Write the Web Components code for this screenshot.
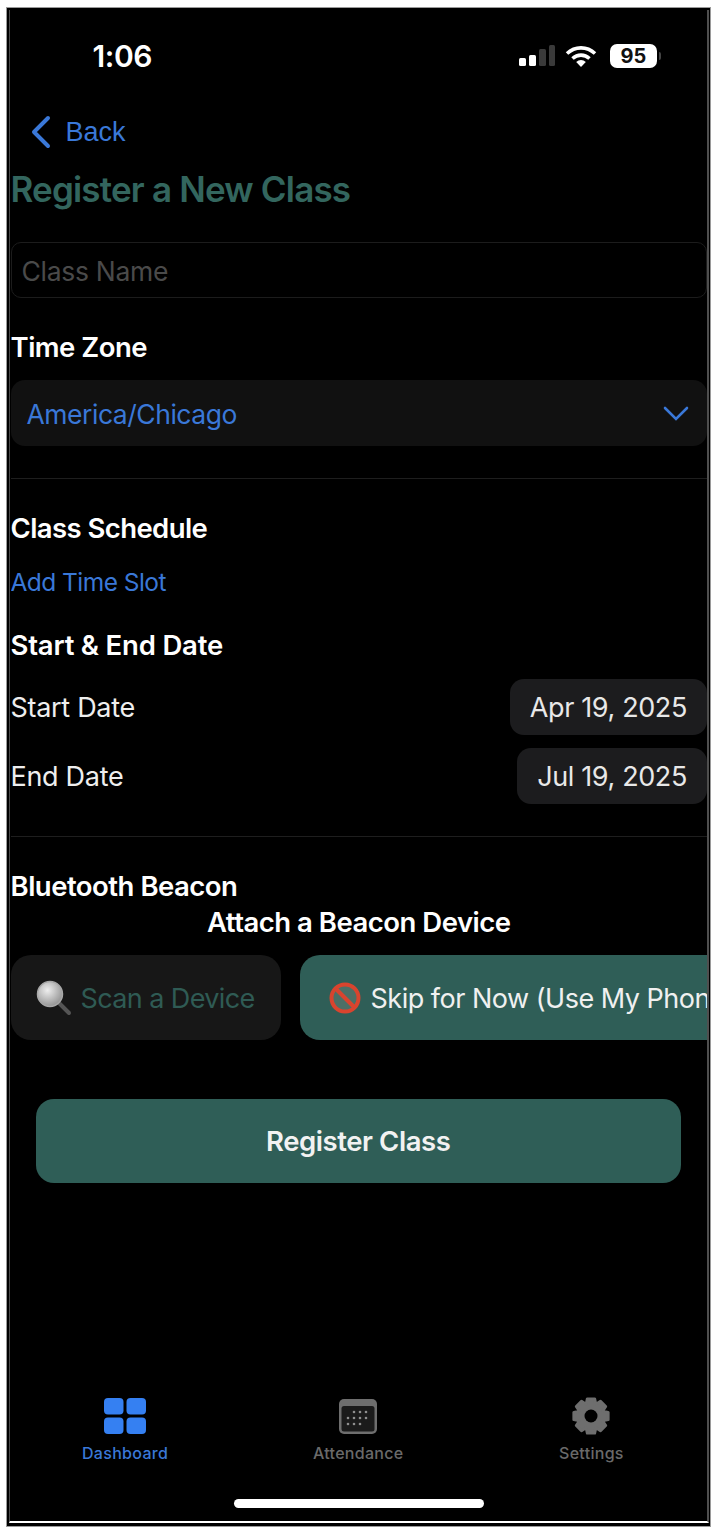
<!DOCTYPE html>
<html><head><meta charset="utf-8">
<style>
html,body{margin:0;padding:0;background:#fff;}
body{width:718px;height:1534px;overflow:hidden;font-family:Inter,"Liberation Sans",sans-serif;}
</style></head>
<body>
<phone-frame>
  <status-bar></status-bar>
  <main-form></main-form>
  <tab-bar></tab-bar>
</phone-frame>
<script>
const C={blue:'#3a78d8',green:'#2f5e57'};
function def(name,html){customElements.define(name,class extends HTMLElement{constructor(){super();this.attachShadow({mode:'open'}).innerHTML=html;}});}
function gear(){
  const cx=20,cy=20,n=8,ro=17.5,ri=13.2;let p=[];
  for(let i=0;i<n;i++){
    const a=i*2*Math.PI/n-Math.PI/2,w=.21,v=.36;
    [[ri,-v],[ro,-w],[ro,w],[ri,v]].forEach(([r,d])=>p.push((cx+r*Math.cos(a+d)).toFixed(2)+','+(cy+r*Math.sin(a+d)).toFixed(2)));
  }
  return `<svg width="40" height="40" viewBox="0 0 40 40"><polygon points="${p.join(' ')}" fill="#6e6e6e" stroke="#6e6e6e" stroke-width="3" stroke-linejoin="round"/><circle cx="20" cy="20" r="6.5" fill="#000"/></svg>`;
}
def('phone-frame',`<style>
:host{display:block;box-sizing:border-box;width:718px;height:1534px;padding:7px 7px 7px 6px;background:#fff}
.frame{box-sizing:border-box;height:100%;border:1px solid #9a9a9a;background:#000;padding:2px 1px 3px 2px}
.in{box-sizing:border-box;height:100%;border-left:1.5px solid #4a4a4a;border-right:2px solid #4f4f4f;border-bottom:2px solid #fff;padding-left:.5px;display:flex;flex-direction:column;color:#fff;overflow:hidden}
</style><div class="frame"><div class="in"><slot></slot></div></div>`);
def('status-bar',`<style>
:host{display:block;flex:none;height:102px}
.row{display:flex;align-items:center;justify-content:space-between;padding:29px 46px 0 82px;height:34px}
.t{font:600 30px/34px Inter,"Liberation Sans",sans-serif;letter-spacing:-.4px}
.r{display:flex;align-items:center}
.bat{display:flex;align-items:center;gap:1.5px;margin-left:13px}
.b{width:47px;height:24px;border-radius:7px;background:#fff;color:#111;font:700 20px/24px Inter,"Liberation Sans",sans-serif;text-align:center}
.n{width:2.5px;height:8px;background:#444;border-radius:0 2px 2px 0}
svg{display:block}
</style><div class="row"><span class="t">1:06</span><div class="r">
<svg width="36" height="24" viewBox="0 0 36 24" style="margin-right:10px"><rect x="0" y="14" width="7" height="8" rx="1.5" fill="#fff"/><rect x="10" y="11" width="7" height="11" rx="1.5" fill="#fff"/><rect x="20" y="5" width="7" height="17" rx="1.5" fill="#3a3a3a"/><rect x="30" y="1" width="6" height="21" rx="1.5" fill="#3a3a3a"/></svg>
<svg width="32" height="24" viewBox="0 0 32 24" fill="none" stroke="#fff" stroke-width="3.6"><path d="M2 9.500C10 2 22 2 30 9.500"/><path d="M7.500 14.500C12.500 10 19.500 10 24.500 14.500"/><path d="M16 23l-4.800-5a7 7 0 0 1 9.600 0z" fill="#fff" stroke="none"/></svg>
<div class="bat"><div class="b">95</div><div class="n"></div></div></div></div>`);
def('main-form',`<style>
:host{display:block;flex:1;min-height:0;overflow:hidden;font-family:Inter,"Liberation Sans",sans-serif}
.back{display:flex;align-items:center;gap:14px;margin:0 0 0 19px;height:40px;color:${C.blue};font-size:27px;font-family:"Liberation Sans",sans-serif}
h1{margin:17px 0 0;font:600 35px/40px Inter,"Liberation Sans",sans-serif;color:#33665e;letter-spacing:-.82px}
.inp{box-sizing:border-box;height:56px;margin:33px 0 0;border:1px solid #1c1c1c;border-radius:10px;padding:0 10px;line-height:56px;font-size:26.5px;color:#4a4a4a;letter-spacing:-.3px}
.lab{font:600 27.5px/32px Inter,"Liberation Sans",sans-serif;letter-spacing:-.5px}
.sel{box-sizing:border-box;height:66px;margin-top:17px;background:#111;border-radius:14px;display:flex;align-items:center;justify-content:space-between;padding:1px 18px 0 16px;color:${C.blue};font-size:26.5px;letter-spacing:-.47px}
hr{border:0;height:1px;background:#1e1e1e;margin:0}
.row{display:flex;justify-content:space-between;align-items:center;font-size:27px;color:#eee;letter-spacing:-.3px}
.d{background:#1c1c1e;border-radius:14px;height:56px;padding:0 20px 0 20px;line-height:58px;color:#e8e8e8;letter-spacing:-.38px}
.c{text-align:center}
.btns{display:flex;gap:19px;margin-top:17px;white-space:nowrap;overflow:hidden}
.bt{flex:none;height:85px;border-radius:20px;display:flex;align-items:center;font-size:27px;box-sizing:border-box}
.bt span{padding-top:2px}
.s{width:270px;background:#171717;color:#2f5b54;padding-left:25px;gap:9px;letter-spacing:-.6px}
.k{width:430px;background:${C.green};color:#f0f0f0;padding-left:29px;gap:10px;letter-spacing:-.5px}
.rg{height:84px;margin:59px 26px 0 25px;border-radius:18px;background:${C.green};color:#f2f2f2;font:600 27.5px/84px Inter,"Liberation Sans",sans-serif;text-align:center;letter-spacing:-.43px}
svg{display:block;flex:none}
</style>
<div class="back"><svg width="22" height="34" viewBox="0 0 22 34" fill="none" stroke="${C.blue}" stroke-width="4" stroke-linecap="round" stroke-linejoin="round"><path d="M18 3L4 17l14 14"/></svg><span>Back</span></div>
<h1>Register a New Class</h1>
<div class="inp">Class Name</div>
<div class="lab" style="margin-top:33px">Time Zone</div>
<div class="sel"><span>America/Chicago</span><svg width="26" height="16" viewBox="0 0 26 16" fill="none" stroke="${C.blue}" stroke-width="2.6" stroke-linecap="round"><path d="M2 2l11 11L24 2"/></svg></div>
<hr style="margin-top:32px">
<div class="lab" style="margin-top:33px;letter-spacing:-.58px">Class Schedule</div>
<div style="margin-top:22px;height:32px;line-height:32px;font-size:24.5px;color:${C.blue};letter-spacing:-.55px">Add Time Slot</div>
<div class="lab" style="margin-top:31px;letter-spacing:-.2px">Start &amp; End Date</div>
<div class="row" style="margin-top:18px"><span>Start Date</span><span class="d">Apr 19, 2025</span></div>
<div class="row" style="margin-top:13px"><span>End Date</span><span class="d">Jul 19, 2025</span></div>
<hr style="margin-top:32px">
<div class="lab" style="margin-top:33px">Bluetooth Beacon</div>
<div class="lab c" style="margin-top:4px">Attach a Beacon Device</div>
<div class="btns"><div class="bt s"><svg width="36" height="36" viewBox="0 0 36 36"><defs><radialGradient id="g" cx=".4" cy=".35" r=".7"><stop offset="0" stop-color="#eeeeee"/><stop offset="1" stop-color="#8f8f8f"/></radialGradient></defs><path d="M22 22l11 11" stroke="#555" stroke-width="4" stroke-linecap="round"/><circle cx="14" cy="14" r="12.500" fill="url(#g)" stroke="#a8a8a8" stroke-width="1.500"/></svg><span>Scan a Device</span></div>
<div class="bt k"><svg width="32" height="32" viewBox="0 0 32 32" fill="rgba(255,220,200,.14)" stroke="#d9442e" stroke-width="4"><circle cx="16" cy="16" r="13.500"/><path d="M7 7l18 18"/></svg><span>Skip for Now (Use My Phone)</span></div></div>
<div class="rg">Register Class</div>`);
const tab=(label,col,svg)=>`<div class="t" style="color:${col}">${svg}<span>${label}</span></div>`;
def('tab-bar',`<style>
:host{display:block;flex:none;height:127px;box-sizing:border-box;padding-top:3px;font-family:Inter,"Liberation Sans",sans-serif}
.tabs{display:grid;grid-template-columns:repeat(3,1fr);margin:0 -1px 0 -2px}
.t{display:flex;flex-direction:column;align-items:center;font-size:16px;line-height:20px;font-weight:500;letter-spacing:.3px}
.ic{height:38px;margin-bottom:8px;display:flex;align-items:center;justify-content:center}
.home{width:250px;height:9px;border-radius:5px;background:#fff;margin:36px auto 0}
svg{display:block}
</style><div class="tabs">
${tab('Dashboard','#3a78d8',`<div class="ic"><svg width="42" height="36" viewBox="0 0 42 36" fill="#3580f2"><rect x="0" y="0" width="19.500" height="16.500" rx="4"/><rect x="22.500" y="0" width="19.500" height="16.500" rx="4"/><rect x="0" y="19.500" width="19.500" height="16.500" rx="4"/><rect x="22.500" y="19.500" width="19.500" height="16.500" rx="4"/></svg></div>`)}
${tab('Attendance','#6a6a6a',`<div class="ic"><svg width="38" height="35" viewBox="0 0 38 35"><rect x="0" y="0" width="38" height="35" rx="5" fill="#6e6e6e"/><rect x="2.500" y="7" width="33" height="25.500" rx="2.500" fill="#1b1b1b"/><g fill="#8e8e8e"><circle cx="15" cy="13" r="1.300"/><circle cx="21" cy="13" r="1.300"/><circle cx="27" cy="13" r="1.300"/><circle cx="9" cy="19" r="1.300"/><circle cx="15" cy="19" r="1.300"/><circle cx="21" cy="19" r="1.300"/><circle cx="27" cy="19" r="1.300"/><circle cx="9" cy="25" r="1.300"/><circle cx="15" cy="25" r="1.300"/><circle cx="21" cy="25" r="1.300"/></g></svg></div>`)}
${tab('Settings','#6a6a6a',`<div class="ic">${gear()}</div>`)}
</div><div class="home"></div>`);
</script>
</body></html>
